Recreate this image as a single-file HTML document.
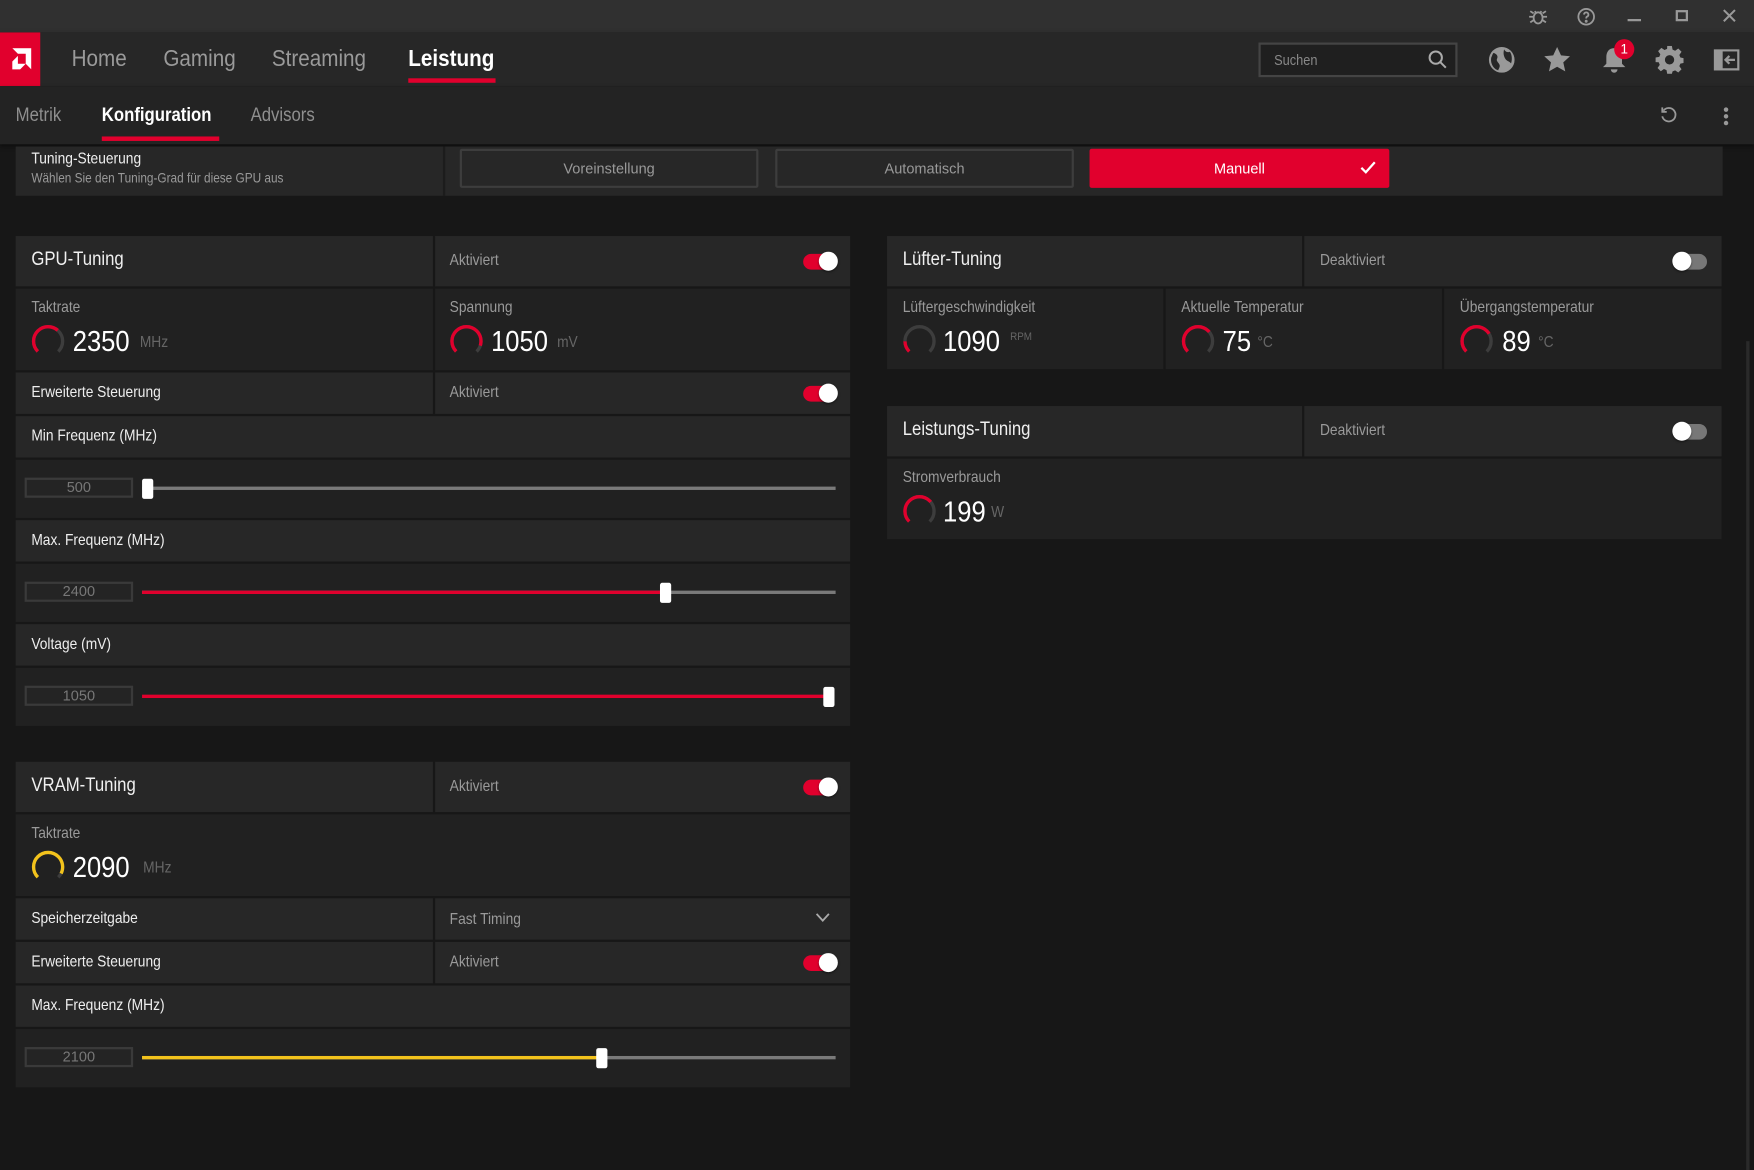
<!DOCTYPE html>
<html><head><meta charset="utf-8"><style>
*{margin:0;padding:0;box-sizing:border-box}
html,body{width:1754px;height:1170px;overflow:hidden;background:#171717}
#w{position:absolute;left:0;top:0;width:1568px;height:1046px;transform:scale(1.11862);transform-origin:0 0;font-family:"Liberation Sans",sans-serif;color:#ddd;background:#171717}
.a{position:absolute}
.c{position:absolute;background:#272727}
.d{position:absolute;background:#212121}
.t{position:absolute;white-space:nowrap;transform:scaleX(.88);transform-origin:0 0}
.ttl{font-size:17px;color:#f0f0f0}
.lb{font-size:14px;color:#eee}
.gr{font-size:14px;color:#9a9a9a}
.val{font-size:26px;color:#fff}
.u{font-size:14px;color:#666}
.tg{position:absolute;width:30px;height:14px;border-radius:7px;background:#e1002d}
.tg::after{content:"";position:absolute;right:-1px;top:-2px;width:17px;height:17px;border-radius:50%;background:#fff;box-shadow:0 1px 2px rgba(0,0,0,.5)}
.tg.off{background:#777}
.tg.off::after{left:-1px;right:auto}
.box{position:absolute;width:97px;height:18px;border:2px solid #3a3a3a;background:#242424;color:#777;font-size:13px;text-align:center;line-height:14px}
.trk{position:absolute;height:3px;background:#7a7a7a}
.th{position:absolute;width:10px;height:18px;background:#fff;border-radius:2px}
</style></head><body><div id="w">
<div class="a" style="left:0;top:0;width:1568px;height:29px;background:#303030"></div>
<svg class="a" style="left:1366px;top:6px" width="18" height="18" viewBox="0 0 18 18" fill="none" stroke="#999" stroke-width="1.6"><ellipse cx="9" cy="10" rx="4" ry="5"/><path d="M6 4l1.5 2M12 4l-1.5 2M1 9h4M13 9h4M2 14l3-2M16 14l-3-2M2 4l3 2M16 4l-3 2"/></svg>
<svg class="a" style="left:1409px;top:6px" width="18" height="18" viewBox="0 0 18 18" fill="none" stroke="#999" stroke-width="1.6"><circle cx="9" cy="9" r="7"/><path d="M7 7a2 2 0 1 1 2.5 2c-.5.3-.5.8-.5 1.5"/><circle cx="9" cy="13" r=".5" fill="#999"/></svg>
<div class="a" style="left:1455px;top:17px;width:12px;height:2px;background:#999"></div>
<div class="a" style="left:1498px;top:9px;width:11px;height:10px;border:2px solid #999"></div>
<svg class="a" style="left:1540px;top:8px" width="12" height="12" viewBox="0 0 12 12" stroke="#999" stroke-width="1.8"><path d="M1 1l10 10M11 1L1 11"/></svg>
<div class="a" style="left:0;top:29px;width:1568px;height:48px;background:#272727;box-shadow:0 2px 4px rgba(0,0,0,.5)"></div>
<div class="a" style="left:0;top:29px;width:36px;height:48px;background:#e1002d"></div>
<svg class="a" style="left:10px;top:43px" width="18" height="22" viewBox="0 0 18 22" fill="#fff"><path d="M1 0h17v19l-5-5V5H6z"/><path d="M1 12l5-5v7h7l-5 5H1z"/></svg>
<div class="t" style="left:64px;top:41px;font-size:21px;color:#9a9a9a">Home</div>
<div class="t" style="left:146px;top:41px;font-size:21px;color:#9a9a9a">Gaming</div>
<div class="t" style="left:243px;top:41px;font-size:21px;color:#9a9a9a">Streaming</div>
<div class="t" style="left:365px;top:41px;font-size:21px;color:#fff;font-weight:bold">Leistung</div>
<div class="a" style="left:365px;top:70px;width:78px;height:4px;background:#e1002d"></div>
<div class="a" style="left:1125px;top:38px;width:178px;height:31px;border:2px solid #444;background:#1f1f1f"></div>
<div class="t" style="left:1139px;top:46px;font-size:13px;color:#888">Suchen</div>
<svg class="a" style="left:1276px;top:44px" width="18" height="18" viewBox="0 0 18 18" fill="none" stroke="#aaa" stroke-width="1.8"><circle cx="7.5" cy="7.5" r="5.5"/><path d="M11.5 11.5l5 5"/></svg>
<svg class="a" style="left:1330px;top:41px" width="25" height="25" viewBox="0 0 24 24"><circle cx="12" cy="12" r="11" fill="#999"/><path d="M5 6c3 1 4 3 3 5s1 3 2 5-1 4-1 5C5 20 2 15 3 10c1-2 1-3 2-4zM14 3c1 2 3 3 5 2 2 3 2 7 1 10-2-2-4-2-5-4s-2-4-1-8z" fill="#272727"/></svg>
<svg class="a" style="left:1380px;top:42px" width="24" height="23" viewBox="0 0 24 23" fill="#999"><path d="M12 0l3.5 7.5 8 .8-6 5.5 1.8 8L12 17.7 4.7 21.8l1.8-8-6-5.5 8-.8z"/></svg>
<svg class="a" style="left:1431px;top:41px" width="24" height="26" viewBox="0 0 24 26" fill="#999"><path d="M12 2c-5 0-7 4-7 8v6l-3 3h20l-3-3v-6c0-4-2-8-7-8z"/><path d="M9 21a3 3 0 0 0 6 0z"/></svg>
<div class="a" style="left:1443px;top:35px;width:18px;height:18px;border-radius:50%;background:#e1002d;color:#fff;font-size:12px;text-align:center;line-height:18px">1</div>
<svg class="a" style="left:1480px;top:41px" width="25" height="25" viewBox="0 0 24 24" fill="#999"><path d="M10 0h4l.6 3.2 2.2 1 2.7-1.9 2.8 2.8-1.9 2.7.9 2.2 3.2.6v4l-3.2.6-.9 2.2 1.9 2.7-2.8 2.8-2.7-1.9-2.2.9L14 24h-4l-.6-3.2-2.2-.9-2.7 1.9-2.8-2.8 1.9-2.7-.9-2.2L0 14v-4l3.2-.6.9-2.2-1.9-2.7 2.8-2.8 2.7 1.9 2.2-1zM12 8a4 4 0 1 0 0 8 4 4 0 0 0 0-8z"/></svg>
<svg class="a" style="left:1532px;top:44px" width="23" height="19" viewBox="0 0 23 19"><rect width="23" height="19" fill="#999"/><rect x="8" y="2" width="13" height="15" fill="#272727"/><path d="M19 9.5h-8M14 6l-3.5 3.5L14 13" stroke="#999" stroke-width="2" fill="none"/></svg>
<div class="a" style="left:0;top:77px;width:1568px;height:52px;background:#232323;box-shadow:0 2px 4px rgba(0,0,0,.5)"></div>
<div class="t" style="left:14px;top:93px;font-size:17px;color:#8f8f8f">Metrik</div>
<div class="t" style="left:91px;top:93px;font-size:17px;color:#fff;font-weight:bold">Konfiguration</div>
<div class="t" style="left:224px;top:93px;font-size:17px;color:#8f8f8f">Advisors</div>
<div class="a" style="left:91px;top:122px;width:105px;height:4px;background:#e1002d"></div>
<svg class="a" style="left:1483px;top:94px" width="18" height="18" viewBox="0 0 18 18" fill="none" stroke="#999" stroke-width="1.6"><path d="M4 5a6 6 0 1 1-1 5"/><path d="M3 2v4h4"/></svg>
<div class="a" style="left:1541px;top:96px;width:4px;height:4px;border-radius:2px;background:#999;box-shadow:0 6px 0 #999,0 12px 0 #999"></div>
<div class="c" style="left:14px;top:131px;width:1526px;height:44px"></div>
<div class="a" style="left:396px;top:131px;width:2px;height:44px;background:#1c1c1c"></div>
<div class="t" style="left:28px;top:133px;font-size:14px;color:#eee">Tuning-Steuerung</div>
<div class="t" style="left:28px;top:152px;font-size:12px;color:#999">Wählen Sie den Tuning-Grad für diese GPU aus</div>
<div class="a" style="left:411px;top:133px;width:267px;height:35px;border:2px solid #3d3d3d;border-radius:2px;color:#999;font-size:13px;text-align:center;line-height:31px">Voreinstellung</div>
<div class="a" style="left:693px;top:133px;width:267px;height:35px;border:2px solid #3d3d3d;border-radius:2px;color:#999;font-size:13px;text-align:center;line-height:31px">Automatisch</div>
<div class="a" style="left:974px;top:133px;width:268px;height:35px;background:#e1002d;border-radius:2px;color:#fff;font-size:13px;text-align:center;line-height:35px">Manuell</div>
<svg class="a" style="left:1216px;top:144px" width="14" height="12" viewBox="0 0 14 12" fill="none" stroke="#fff" stroke-width="2"><path d="M1 6l4 4 8-9"/></svg>

<div class="c" style="left:14px;top:211px;width:373px;height:45px"></div>
<div class="c" style="left:389px;top:211px;width:371px;height:45px"></div>
<div class="t ttl" style="left:28px;top:222px">GPU-Tuning</div>
<div class="t gr" style="left:402px;top:224px">Aktiviert</div>
<div class="tg" style="left:718px;top:227px"></div>
<div class="d" style="left:14px;top:258px;width:373px;height:73px"></div>
<div class="d" style="left:389px;top:258px;width:371px;height:73px"></div>
<div class="t gr" style="left:28px;top:266px">Taktrate</div>
<div class="t gr" style="left:402px;top:266px">Spannung</div>
<svg class="a" style="left:27px;top:289px" width="32" height="32"><circle cx="16" cy="16" r="13" fill="none" stroke="#3d3d3d" stroke-width="3" stroke-dasharray="61.3 100" transform="rotate(135 16 16)"/><circle cx="16" cy="16" r="13" fill="none" stroke="#e1002d" stroke-width="3" stroke-dasharray="40 100" transform="rotate(135 16 16)"/></svg>
<div class="t val" style="left:65px;top:290px">2350</div><div class="t u" style="left:125px;top:297px">MHz</div>
<svg class="a" style="left:401px;top:289px" width="32" height="32"><circle cx="16" cy="16" r="13" fill="none" stroke="#3d3d3d" stroke-width="3" stroke-dasharray="61.3 100" transform="rotate(135 16 16)"/><circle cx="16" cy="16" r="13" fill="none" stroke="#e1002d" stroke-width="3" stroke-dasharray="55 100" transform="rotate(135 16 16)"/></svg>
<div class="t val" style="left:439px;top:290px">1050</div><div class="t u" style="left:498px;top:297px">mV</div>
<div class="c" style="left:14px;top:333px;width:373px;height:37px"></div>
<div class="c" style="left:389px;top:333px;width:371px;height:37px"></div>
<div class="t lb" style="left:28px;top:342px">Erweiterte Steuerung</div>
<div class="t gr" style="left:402px;top:342px">Aktiviert</div>
<div class="tg" style="left:718px;top:345px"></div>
<div class="c" style="left:14px;top:372px;width:746px;height:37px"></div>
<div class="t lb" style="left:28px;top:381px">Min Frequenz (MHz)</div>
<div class="d" style="left:14px;top:411px;width:746px;height:52px"></div>
<div class="box" style="left:22px;top:427px">500</div>
<div class="trk" style="left:127px;top:435px;width:620px"></div>
<div class="th" style="left:127px;top:428px"></div>
<div class="c" style="left:14px;top:465px;width:746px;height:37px"></div>
<div class="t lb" style="left:28px;top:474px">Max. Frequenz (MHz)</div>
<div class="d" style="left:14px;top:504px;width:746px;height:52px"></div>
<div class="box" style="left:22px;top:520px">2400</div>
<div class="trk" style="left:127px;top:528px;width:620px"></div>
<div class="trk" style="left:127px;top:528px;width:468px;background:#e1002d"></div>
<div class="th" style="left:590px;top:521px"></div>
<div class="c" style="left:14px;top:558px;width:746px;height:37px"></div>
<div class="t lb" style="left:28px;top:567px">Voltage (mV)</div>
<div class="d" style="left:14px;top:597px;width:746px;height:52px"></div>
<div class="box" style="left:22px;top:613px">1050</div>
<div class="trk" style="left:127px;top:621px;width:615px;background:#e1002d"></div>
<div class="th" style="left:736px;top:614px"></div>

<div class="c" style="left:14px;top:681px;width:373px;height:45px"></div>
<div class="c" style="left:389px;top:681px;width:371px;height:45px"></div>
<div class="t ttl" style="left:28px;top:692px">VRAM-Tuning</div>
<div class="t gr" style="left:402px;top:694px">Aktiviert</div>
<div class="tg" style="left:718px;top:697px"></div>
<div class="d" style="left:14px;top:728px;width:746px;height:73px"></div>
<div class="t gr" style="left:28px;top:736px">Taktrate</div>
<svg class="a" style="left:27px;top:759px" width="32" height="32"><circle cx="16" cy="16" r="13" fill="none" stroke="#3d3d3d" stroke-width="3" stroke-dasharray="61.3 100" transform="rotate(135 16 16)"/><circle cx="16" cy="16" r="13" fill="none" stroke="#f3c31c" stroke-width="3" stroke-dasharray="57 100" transform="rotate(135 16 16)"/></svg>
<div class="t val" style="left:65px;top:760px">2090</div><div class="t u" style="left:128px;top:767px">MHz</div>
<div class="c" style="left:14px;top:803px;width:373px;height:37px"></div>
<div class="c" style="left:389px;top:803px;width:371px;height:37px"></div>
<div class="t lb" style="left:28px;top:812px">Speicherzeitgabe</div>
<div class="t gr" style="left:402px;top:813px">Fast Timing</div>
<svg class="a" style="left:729px;top:816px" width="13" height="9" viewBox="0 0 13 9" fill="none" stroke="#aaa" stroke-width="1.6"><path d="M1 1l5.5 6L12 1"/></svg>
<div class="c" style="left:14px;top:842px;width:373px;height:37px"></div>
<div class="c" style="left:389px;top:842px;width:371px;height:37px"></div>
<div class="t lb" style="left:28px;top:851px">Erweiterte Steuerung</div>
<div class="t gr" style="left:402px;top:851px">Aktiviert</div>
<div class="tg" style="left:718px;top:854px"></div>
<div class="c" style="left:14px;top:881px;width:746px;height:37px"></div>
<div class="t lb" style="left:28px;top:890px">Max. Frequenz (MHz)</div>
<div class="d" style="left:14px;top:920px;width:746px;height:52px"></div>
<div class="box" style="left:22px;top:936px">2100</div>
<div class="trk" style="left:127px;top:944px;width:620px"></div>
<div class="trk" style="left:127px;top:944px;width:410px;background:#f3c31c"></div>
<div class="th" style="left:533px;top:937px"></div>

<div class="c" style="left:793px;top:211px;width:371px;height:45px"></div>
<div class="c" style="left:1166px;top:211px;width:373px;height:45px"></div>
<div class="t ttl" style="left:807px;top:222px">Lüfter-Tuning</div>
<div class="t gr" style="left:1180px;top:224px">Deaktiviert</div>
<div class="tg off" style="left:1496px;top:227px"></div>
<div class="d" style="left:793px;top:258px;width:247px;height:72px"></div>
<div class="d" style="left:1042px;top:258px;width:247px;height:72px"></div>
<div class="d" style="left:1291px;top:258px;width:248px;height:72px"></div>
<div class="t gr" style="left:807px;top:266px">Lüftergeschwindigkeit</div>
<div class="t gr" style="left:1056px;top:266px">Aktuelle Temperatur</div>
<div class="t gr" style="left:1305px;top:266px">Übergangstemperatur</div>
<svg class="a" style="left:806px;top:289px" width="32" height="32"><circle cx="16" cy="16" r="13" fill="none" stroke="#3d3d3d" stroke-width="3" stroke-dasharray="61.3 100" transform="rotate(135 16 16)"/><circle cx="16" cy="16" r="13" fill="none" stroke="#e1002d" stroke-width="3" stroke-dasharray="10 100" transform="rotate(135 16 16)"/></svg>
<div class="t val" style="left:843px;top:290px">1090</div><div class="t" style="left:903px;top:296px;font-size:10px;color:#666">RPM</div>
<svg class="a" style="left:1055px;top:289px" width="32" height="32"><circle cx="16" cy="16" r="13" fill="none" stroke="#3d3d3d" stroke-width="3" stroke-dasharray="61.3 100" transform="rotate(135 16 16)"/><circle cx="16" cy="16" r="13" fill="none" stroke="#e1002d" stroke-width="3" stroke-dasharray="42 100" transform="rotate(135 16 16)"/></svg>
<div class="t val" style="left:1093px;top:290px">75</div><div class="t u" style="left:1124px;top:297px">°C</div>
<svg class="a" style="left:1304px;top:289px" width="32" height="32"><circle cx="16" cy="16" r="13" fill="none" stroke="#3d3d3d" stroke-width="3" stroke-dasharray="61.3 100" transform="rotate(135 16 16)"/><circle cx="16" cy="16" r="13" fill="none" stroke="#e1002d" stroke-width="3" stroke-dasharray="44 100" transform="rotate(135 16 16)"/></svg>
<div class="t val" style="left:1343px;top:290px">89</div><div class="t u" style="left:1375px;top:297px">°C</div>

<div class="c" style="left:793px;top:363px;width:371px;height:45px"></div>
<div class="c" style="left:1166px;top:363px;width:373px;height:45px"></div>
<div class="t ttl" style="left:807px;top:374px">Leistungs-Tuning</div>
<div class="t gr" style="left:1180px;top:376px">Deaktiviert</div>
<div class="tg off" style="left:1496px;top:379px"></div>
<div class="d" style="left:793px;top:410px;width:746px;height:72px"></div>
<div class="t gr" style="left:807px;top:418px">Stromverbrauch</div>
<svg class="a" style="left:806px;top:441px" width="32" height="32"><circle cx="16" cy="16" r="13" fill="none" stroke="#3d3d3d" stroke-width="3" stroke-dasharray="61.3 100" transform="rotate(135 16 16)"/><circle cx="16" cy="16" r="13" fill="none" stroke="#e1002d" stroke-width="3" stroke-dasharray="42 100" transform="rotate(135 16 16)"/></svg>
<div class="t val" style="left:843px;top:442px">199</div><div class="t u" style="left:886px;top:449px">W</div>
<div class="a" style="left:1561px;top:305px;width:3px;height:741px;background:#2a2a2a"></div>
</div></body></html>
